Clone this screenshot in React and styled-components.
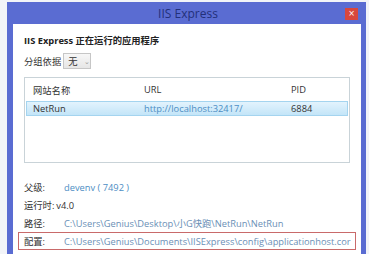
import React from "react";
import styled, { createGlobalStyle } from "styled-components";

const GlobalStyle = createGlobalStyle`
    html, body {
        margin: 0;
        padding: 0;
        background: #f2f4f8;
        overflow: hidden;
    }
    body {
        font-family: "Open Sans", "Noto Sans CJK SC", sans-serif;
        font-size: 9.3px;
        color: #333;
    }
`

const Page = styled.div`
    width: 369px;
    height: 254px;
    padding: 2px 3px 0 7px;
    box-sizing: border-box;
    overflow: hidden;
`

const Window = styled.div`
    background: #5a6cd2;
    padding: 0 5px 0 6px;
    height: 260px;
    display: flex;
    flex-direction: column;
`

const TitleBar = styled.div`
    height: 22px;
    display: grid;
    grid-template-columns: 1fr auto 1fr;
    align-items: center;
`

const Title = styled.div`
    grid-column: 2;
    font-family: "Open Sans", sans-serif;
    font-size: 12px;
    color: #23307a;
    padding-left: 2px;
`

const CloseButton = styled.div`
    grid-column: 3;
    justify-self: end;
    width: 13px;
    height: 12px;
    margin-right: 3px;
    margin-top: 1px;
    background: #d8473d;
    color: #fff;
    font-size: 8px;
    line-height: 12px;
    text-align: center;
    font-family: "DejaVu Sans", sans-serif;
`

const Content = styled.div`
    flex: 1;
    background: #fff;
    padding: 9px 11px 0 11px;
`

const Heading = styled.div`
    font-weight: bold;
    font-size: 9.3px;
    line-height: 16px;
    color: #222;
`

const GroupRow = styled.div`
    display: flex;
    align-items: center;
    height: 18px;
    margin-top: 3px;
    gap: 2px;
`

const Select = styled.div`
    display: flex;
    align-items: center;
    gap: 6px;
    height: 16px;
    width: 28px;
    box-sizing: border-box;
    padding-left: 4px;
    border: 1px solid #c6c6c6;
    background: linear-gradient(#f7f7f7, #e6e6e6);
    color: #333;
`

const Chevron = styled.span`
    color: #999;
    font-size: 7px;
`

const Table = styled.div`
    margin-top: 7px;
    height: 86px;
    border: 1px solid #c9d3d8;
    box-sizing: border-box;
    padding: 0 1px;
`

const Row = styled.div`
    display: grid;
    grid-template-columns: 111px 147px 1fr;
    align-items: center;
    height: ${props => props.h}px;
    padding-left: 7px;
    box-sizing: border-box;
    color: #333;
    ${props => props.selected && `
        background: linear-gradient(#e3f3fd, #c3e5f8);
        border: 1px solid #a4d4ef;
        padding-left: 6px;
    `}
`

const LinkText = styled.span`
    color: ${props => props.dim ? "#6a8fb6" : "#4d8ec4"};
`

const Info = styled.div`
    margin-top: 15px;
`

const InfoRow = styled.div`
    display: flex;
    align-items: center;
    height: 18px;
    white-space: nowrap;
    box-sizing: border-box;
    ${props => props.boxed && `
        border: 1px solid #c96a6a;
        margin: 0 -6px;
        padding-left: 5px;
    `}
`

const Label = styled.span`
    width: ${props => props.w || "auto"};
    margin-right: ${props => props.w ? "0" : "2px"};
    flex-shrink: 0;
    color: #333;
`

export default function App() {
    return (
        <>
            <GlobalStyle />
            <Page>
                <Window>
                    <TitleBar>
                        <Title>IIS Express</Title>
                        <CloseButton>×</CloseButton>
                    </TitleBar>
                    <Content>
                        <Heading>IIS Express 正在运行的应用程序</Heading>
                        <GroupRow>
                            分组依据
                            <Select>无<Chevron>⌄</Chevron></Select>
                        </GroupRow>
                        <Table>
                            <Row h={23}>
                                <span>网站名称</span>
                                <span>URL</span>
                                <span>PID</span>
                            </Row>
                            <Row h={15} selected>
                                <span>NetRun</span>
                                <LinkText>http://localhost:32417/</LinkText>
                                <span>6884</span>
                            </Row>
                        </Table>
                        <Info>
                            <InfoRow>
                                <Label w="40px">父级:</Label>
                                <LinkText>devenv ( 7492 )</LinkText>
                            </InfoRow>
                            <InfoRow>
                                <Label>运行时:</Label>
                                <span>v4.0</span>
                            </InfoRow>
                            <InfoRow>
                                <Label w="40px">路径:</Label>
                                <LinkText dim>C:\Users\Genius\Desktop\小G快跑\NetRun\NetRun</LinkText>
                            </InfoRow>
                            <InfoRow boxed>
                                <Label w="40px">配置:</Label>
                                <LinkText dim>C:\Users\Genius\Documents\IISExpress\config\applicationhost.cor</LinkText>
                            </InfoRow>
                        </Info>
                    </Content>
                </Window>
            </Page>
        </>
    );
}
